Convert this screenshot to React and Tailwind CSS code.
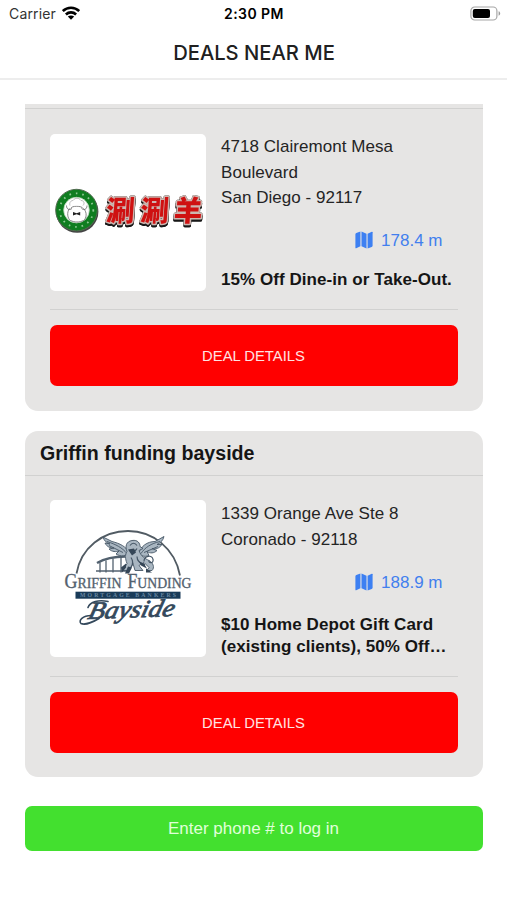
function StatusBar() {
  return (
    <div className="grid h-7 grid-cols-3 items-center pl-[9px] pr-[6px] font-['Inter',sans-serif] text-[14px] leading-none text-[#222]">
      <div className="flex items-center gap-[6px]">
        <span className="tracking-[0.15px] text-[#333]">Carrier</span>
        <svg width="18" height="14" viewBox="0 0 18 14" className="-mt-[2px] text-black" fill="none" stroke="currentColor" strokeWidth="2.6">
          <path d="M0.8 5.1C5.4 0.6 12.6 0.6 17.2 5.1" />
          <path d="M3.9 8.5C6.8 5.7 11.2 5.7 14.1 8.5" />
          <path d="M9 13.8 5.8 10.6C7.6 9 10.4 9 12.2 10.6Z" fill="currentColor" stroke="none" />
        </svg>
      </div>
      <span className="-ml-[2px] text-center text-[14px] font-semibold tracking-[0.45px] text-black">2:30 PM</span>
      <svg width="31" height="15" viewBox="0 0 31 15" className="-mt-[2px] justify-self-end">
        <rect x="0.9" y="1" width="26" height="13" rx="3.8" fill="#fff" stroke="#a6a6a6" strokeWidth="1.2" />
        <rect x="2.8" y="2.9" width="17.2" height="9.2" rx="2" fill="#000" />
        <path d="M28.6 5.3C30.7 6 30.7 9 28.6 9.7Z" fill="#999" />
      </svg>
    </div>
  );
}

function MapIcon() {
  return (
    <svg width="18" height="18" viewBox="0 0 18 18" className="-mt-[2px]" fill="#3d80f2">
      <path d="M.4 3.3C.4 2.7.8 2.3 1.3 2.1L5.4.6v14.7L1.2 17.2c-.5.2-.8 0-.8-.5Z" />
      <path d="m6.5.6 5 2.1v14.7l-5-2.1Z" />
      <path d="M12.6 2.7 16.8.8c.5-.2.8 0 .8.5v13.4c0 .6-.4 1-.9 1.2l-4.1 1.5Z" />
    </svg>
  );
}

function HotPotLogo() {
  const glyphs = [["涮", 69.8], ["涮", 104], ["羊", 137.4]];
  return (
    <svg viewBox="0 0 156 156" className="size-full" role="img">
      <ellipse cx="27.2" cy="77.3" rx="21.2" ry="21" fill="#444" />
      <circle cx="26.5" cy="75.6" r="20.8" fill="#0f7d20" stroke="#526b50" strokeWidth="1" />
      <circle cx="26.5" cy="75.6" r="16.8" fill="none" stroke="#8fc794" strokeWidth="1.8" strokeDasharray="1.6 4.9" />
      <circle cx="26.5" cy="75.6" r="12.8" fill="#fff" stroke="#b9d6b9" strokeWidth="0.8" />
      <g fill="#fff" stroke="#666" strokeWidth="0.8">
        <path d="M19.5 74c-3 4-2 10 1 12 4 2 9 2 13 0 3-2 4-8 0-12" />
        <path d="M21 74c0-3 11-3 12 0" />
        <path d="M20 71c-1-3 1-5 3-5 2-3 6-3 8 0 3 0 4 3 2 5" stroke="#aaa" />
        <path d="M16.5 71c0 4 3 5 5.5 3M37 71c0 4-3 5-5.5 3" fill="none" />
      </g>
      <path d="m23 77.6 3.6 1.2 3.6-1.2v3.4l-3.6-1.2-3.6 1.2Z" fill="#222" />
      <g
        className="[filter:drop-shadow(0_0_0.5px_#333)_drop-shadow(0.5px_2.4px_0_#171717)]"
        fontFamily="'Noto Sans CJK SC', sans-serif"
        fontWeight="900"
        fontSize="28.5"
        textAnchor="middle"
        strokeLinejoin="round"
        fill="#cf1111"
        stroke="#cdb6b0"
        strokeWidth="3"
        paintOrder="stroke"
      >
        {glyphs.map(([char, x]) => (
          <text key={x} transform={`translate(${x} 86.2) skewX(-4)`}>{char}</text>
        ))}
      </g>
    </svg>
  );
}

function GriffinLogo() {
  return (
    <svg viewBox="0 0 156 156" className="size-full" role="img">
      <path d="M26.5 73C31 47 53 30.5 78 30.5s47 17.5 52 44.5" fill="none" stroke="#515b63" strokeWidth="1.8" />
      <g fill="none" stroke="#52616f" strokeWidth="1.3">
        <path d="M47 62.5c7-4 17-6.5 28-6.5" strokeWidth="2.5" />
        <path d="M46 70.5h32" />
        <path d="M50 62v10M56 60v12M63 58v14M71 57v15" />
      </g>
      <g fill="#a9b6c1" stroke="#465767" strokeWidth="0.9" strokeLinejoin="round">
        <path d="M79 52c-3-6-9-9-17-11l-9-4.5c1 4 4 6 7 7l-5-1c2 4 5 5 9 5l-5 1c3 3 7 3 10 2l-3 3c5 3 10 2 13-1Z" />
        <path d="M89 52c2-6 8-11 16-11l9-5c-1 4-4 7-7 8h5c-3 4-6 5-10 4l5 2c-3 3-7 3-10 1l2 4c-5 2-9 0-11-3Z" />
        <path d="M57 41c9 3 15 6 20 12M59 45l14 7M110 41c-9 2-15 6-19 12M108 46l-14 6" fill="none" />
        <path d="M77 51c-2-5-1-10 5-11 6-1 8 3 8 6l3 2-4 2c2 6 6 8 10 10 4 2 6 7 3 10h-5l2-3-5-5-5 3 4 5h-8l-2-7-4 7h-6l4-7c-2-5-2-9 0-12Z" />
        <path d="M94 61c0-6 8-7 9-2 1 4-5 4-4 1M80 45c2-3 5-3 7 0M80 51c4 1 6-1 7-3M81 57c2 3 2 7 0 10M87 56c0 4 3 7 8 8" fill="none" strokeWidth="1.2" />
      </g>
      <path d="m78 49 6-1 2 4-4 3ZM89 61l5 2 3 5-6-3ZM78 66l4 1-3 6h-4ZM96 68l6 4h-6ZM71 67l5-4v4l-4 5Z" fill="#354657" />
      <g fontFamily="'Liberation Serif', serif" fill="#53616e" stroke="#53616e" strokeWidth="0.35">
        <text x="14.5" y="87.8" fontSize="20" textLength="57" lengthAdjust="spacingAndGlyphs">G<tspan fontSize="15.5">RIFFIN</tspan></text>
        <text x="77.5" y="87.8" fontSize="20" textLength="64" lengthAdjust="spacingAndGlyphs">F<tspan fontSize="15.5">UNDING</tspan></text>
      </g>
      <rect x="25.5" y="91.2" width="105" height="7" fill="#193b58" />
      <text x="30" y="96.9" fontFamily="'Liberation Serif', serif" fontWeight="700" fontSize="5.8" fill="#6585a0" textLength="96">MORTGAGE BANKERS</text>
      <text transform="translate(37 118.5) rotate(-2) skewX(-16)" fontFamily="'Liberation Serif', serif" fontStyle="italic" fontSize="24.5" fill="#34495c" stroke="#34495c" strokeWidth="0.8" textLength="86" lengthAdjust="spacingAndGlyphs">Bayside</text>
      <path d="M38 107c2-6 11-8 20-6M41 115c-8 0-13 5-10 8 4 2 13-2 18-5" fill="none" stroke="#34495c" strokeWidth="1.6" strokeLinecap="round" />
    </svg>
  );
}

function DealBody({ logo, address, distance, offer }) {
  return (
    <div className="px-[25px] pb-6 pt-[25px]">
      <div className="flex h-[176px] gap-[15px] border-b border-[#d1d1d0]">
        <div className={`${offer.length > 1 ? "-mt-px" : ""} h-[157px] w-[156px] shrink-0 overflow-hidden rounded-[5px] bg-white`}>{logo}</div>
        <div className="flex h-[157px] min-w-0 flex-1 flex-col text-[17px]">
          <div className="leading-[25.7px] tracking-[0.05px]">
            {address.map((line) => (
              <p key={line}>{line}</p>
            ))}
          </div>
          <div className="mt-auto flex items-center gap-[8px] self-end pr-[15.5px] leading-6 text-[#427fee]">
            <MapIcon />
            <span>{distance}</span>
          </div>
          <div className={`${offer.length > 1 ? "mt-[19px]" : "mt-[16px]"} whitespace-nowrap font-bold leading-[22px] tracking-[0.06px] text-[#151515]`}>
            {offer.map((line) => (
              <p key={line}>{line}</p>
            ))}
          </div>
        </div>
      </div>
      <button className="mt-[15px] block h-[61px] w-full rounded-[7px] bg-[#ff0000] pr-px pt-[1px] text-[14.8px] text-[#ffe3e3]">DEAL DETAILS</button>
    </div>
  );
}

export default function App() {
  return (
    <div className="h-[900px] w-[507px] overflow-hidden bg-white font-['Liberation_Sans',Arial,sans-serif] text-[#242424]">
      <header className="h-[80px] border-b-2 border-[#ededed]">
        <StatusBar />
        <h1 className="pl-px text-center font-['Inter',sans-serif] text-[20.2px] font-medium leading-[49px] text-[#202020]">DEALS NEAR ME</h1>
      </header>
      <main className="pl-[25px] pr-6 pt-6">
        <section className="h-[307px] rounded-b-[13px] bg-[#e6e5e4]">
          <div className="h-[5px] border-b border-[#d1d1d0]" />
          <DealBody
            logo={<HotPotLogo />}
            address={["4718 Clairemont Mesa", "Boulevard", "San Diego - 92117"]}
            distance="178.4 m"
            offer={["15% Off Dine-in or Take-Out."]}
          />
        </section>
        <section className="mt-5 h-[346px] rounded-[13px] bg-[#e6e5e4]">
          <h2 className="h-[45px] border-b border-[#d1d1d0] pl-[15px] text-[19.6px] font-bold leading-[44px] text-[#151515]">Griffin funding bayside</h2>
          <DealBody
            logo={<GriffinLogo />}
            address={["1339 Orange Ave Ste 8", "Coronado - 92118"]}
            distance="188.9 m"
            offer={["$10 Home Depot Gift Card", "(existing clients), 50% Off…"]}
          />
        </section>
        <button className="mt-[29px] block h-[45px] w-full rounded-[7px] bg-[#43e02f] pr-px text-[17px] text-[#e0ffda]">Enter phone # to log in</button>
      </main>
    </div>
  );
}
